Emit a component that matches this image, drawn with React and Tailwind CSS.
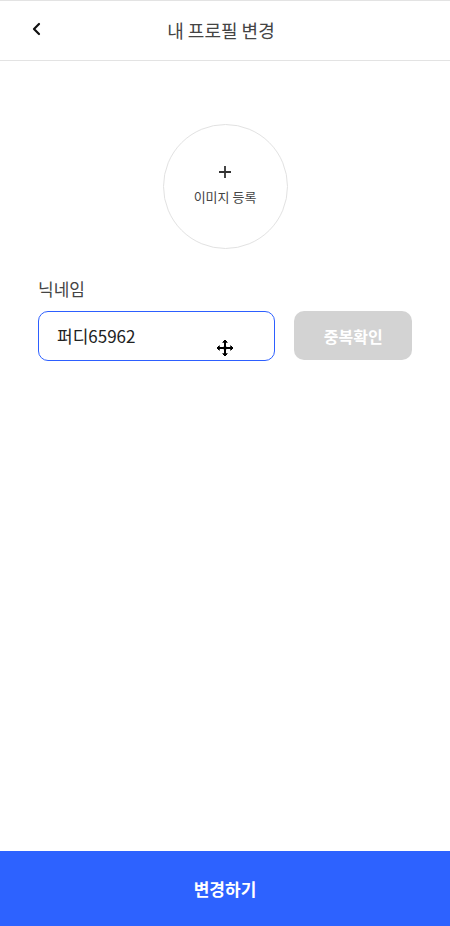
import React from "react";

function MoveCursor() {
    return (
        <svg width="20" height="20" viewBox="0 0 20 20" className="absolute left-[176px] top-[26px]">
            <path
                d="M10 1 L14 5 L11.5 5 L11.5 8.5 L15 8.5 L15 6 L19 10 L15 14 L15 11.5 L11.5 11.5 L11.5 15 L14 15 L10 19 L6 15 L8.5 15 L8.5 11.5 L5 11.5 L5 14 L1 10 L5 6 L5 8.5 L8.5 8.5 L8.5 5 L6 5 Z"
                fill="#000"
                stroke="#fff"
                strokeWidth="1"
                strokeLinejoin="miter"
            />
        </svg>
    );
}

export default function App() {
    return (
        <div
            className="w-[450px] h-[926px] flex flex-col bg-white text-[#333]"
            style={{ fontFamily: '"Noto Sans CJK KR", "Noto Sans", sans-serif' }}
        >
            {/* Header */}
            <header className="h-[61px] border-t border-b border-[#e3e3e3] flex items-center relative">
                <button className="absolute left-[25px] top-[16px] w-6 h-6 flex items-center justify-center">
                    <svg width="14" height="14" viewBox="0 0 14 14">
                        <path d="M9 2 L4 7 L9 12" fill="none" stroke="#111" strokeWidth="2.2" strokeLinecap="round" strokeLinejoin="round" />
                    </svg>
                </button>
                <h1 className="w-full text-center text-[18px] text-[#444] font-normal pr-[8px]">내 프로필 변경</h1>
            </header>

            {/* Content */}
            <main className="flex-1 px-[38px]">
                <div className="flex justify-center pt-[63px]">
                    <button className="w-[125px] h-[125px] rounded-full border border-[#e2e2e2] flex flex-col items-center justify-center">
                        <svg width="14" height="14" viewBox="0 0 14 14" className="mb-[8px] -mt-[1px]">
                            <path d="M7 1 V13 M1 7 H13" stroke="#333" strokeWidth="1.8" />
                        </svg>
                        <span className="text-[13px] text-[#444]">이미지 등록</span>
                    </button>
                </div>

                <div className="mt-[27px]">
                    <label className="block text-[17px] text-[#444] leading-[26px]">닉네임</label>
                    <div className="flex gap-[19px] mt-[9px]">
                        <div className="relative w-[238px] h-[50px] rounded-[10px] border border-[#2d5fff] flex items-center px-[18px]">
                            <span className="text-[17px] text-[#222]">퍼디65962</span>
                            <MoveCursor />
                        </div>
                        <button className="w-[118px] h-[49px] rounded-[10px] bg-[#d3d3d3] text-white text-[16px] font-bold">
                            중복확인
                        </button>
                    </div>
                </div>
            </main>

            {/* Footer button */}
            <button className="h-[75px] w-full bg-[#2d62ff] text-white text-[17px] font-bold">변경하기</button>
        </div>
    );
}
